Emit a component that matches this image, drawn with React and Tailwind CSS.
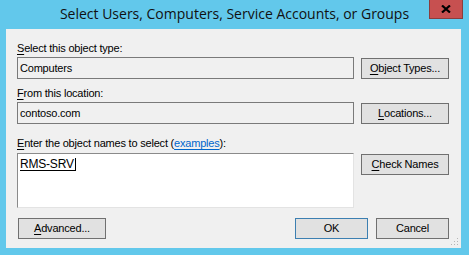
import React from "react";

const font = { fontFamily: '"Liberation Sans", Arial, sans-serif' };

function U({ children }) {
  return <span className="underline underline-offset-[2px] decoration-[1px]">{children}</span>;
}

function Btn({ children, w = "w-[88px]", blue = false, className = "" }) {
  return (
    <div
      className={`${w} h-[21px] flex items-center justify-center bg-[#e1e1e1] border ${
        blue ? "border-[#3c7fb1]" : "border-[#707070]"
      } text-[11px] leading-[13px] tracking-[-0.2px] text-black ${className}`}
    >
      {children}
    </div>
  );
}

export default function App() {
  return (
    <div
      className="w-[469px] h-[255px] bg-[#62c8eb] overflow-hidden flex flex-col"
      style={font}
    >
      {/* title bar */}
      <div className="relative h-[29px] shrink-0 flex items-start justify-center">
        <div
          className="mt-[4px] text-[14px] leading-[20px] text-[#111111]"
          style={{ fontFamily: '"Open Sans", "Noto Sans", sans-serif' }}
        >
          Select Users, Computers, Service Accounts, or Groups
        </div>
        <div className="absolute left-[429px] top-[-1px] w-[34px] h-[20px] bg-[#c75050] border border-[#8a3d3d] flex items-center justify-center">
          <svg width="10" height="8" viewBox="0 0 10 8">
            <path d="M1 0.5 L9 7.5 M9 0.5 L1 7.5" stroke="#000" strokeWidth="2.2" />
          </svg>
        </div>
      </div>

      {/* content panel */}
      <div className="relative ml-[6px] w-[455px] h-[219px] bg-[#f0f0f0] pl-[11px] pt-[13px] text-[11px] leading-[13px] tracking-[-0.2px] text-black">
        <div className="h-[15px]">
          <U>S</U>elect this object type:
        </div>
        <div className="flex items-start">
          <div className="w-[337px] h-[22px] border border-[#7a7a7a] bg-[#f0f0f0] pl-[2px] flex items-center">
            Computers
          </div>
          <Btn className="ml-[7px] mt-[1px]">
            <U>O</U>bject Types...
          </Btn>
        </div>

        <div className="h-[15px] mt-[8px]">
          <U>F</U>rom this location:
        </div>
        <div className="flex items-start">
          <div className="w-[337px] h-[22px] border border-[#7a7a7a] bg-[#f0f0f0] pl-[2px] flex items-center">
            contoso.com
          </div>
          <Btn className="ml-[7px] mt-[1px]">
            <U>L</U>ocations...
          </Btn>
        </div>

        <div className="h-[16px] mt-[13px]">
          <U>E</U>nter the object names to select (
          <span className="text-[#0066cc] underline underline-offset-[2px]">examples</span>):
        </div>
        <div className="flex items-start">
          <div className="w-[337px] h-[55px] border-t border-l border-[#8a8a8a] border-r-[#e3e3e3] border-b-[#e3e3e3] border-r border-b bg-white pl-[2px] pt-[4px]">
            <span className="inline-block border-b border-r border-black leading-[12px] text-[12px] pr-[1px]">
              RMS-SRV
            </span>
          </div>
          <Btn className="ml-[7px] mt-[1px]">
            <U>C</U>heck Names
          </Btn>
        </div>

        <div className="flex items-start mt-[10px]">
          <Btn className="ml-[1px]">
            <U>A</U>dvanced...
          </Btn>
          <Btn w="w-[73px]" blue className="ml-[189px]">
            OK
          </Btn>
          <Btn w="w-[73px]" className="ml-[8px]">
            Cancel
          </Btn>
        </div>

        <svg className="absolute right-[2px] bottom-[2px]" width="8" height="8" viewBox="0 0 8 8">
          <rect x="6" y="0" width="1" height="1" fill="#b5b5b5" />
          <rect x="3" y="3" width="1" height="1" fill="#b5b5b5" />
          <rect x="6" y="3" width="1" height="1" fill="#b5b5b5" />
          <rect x="0" y="6" width="1" height="1" fill="#b5b5b5" />
          <rect x="3" y="6" width="1" height="1" fill="#b5b5b5" />
          <rect x="6" y="6" width="1" height="1" fill="#b5b5b5" />
        </svg>
      </div>
    </div>
  );
}
